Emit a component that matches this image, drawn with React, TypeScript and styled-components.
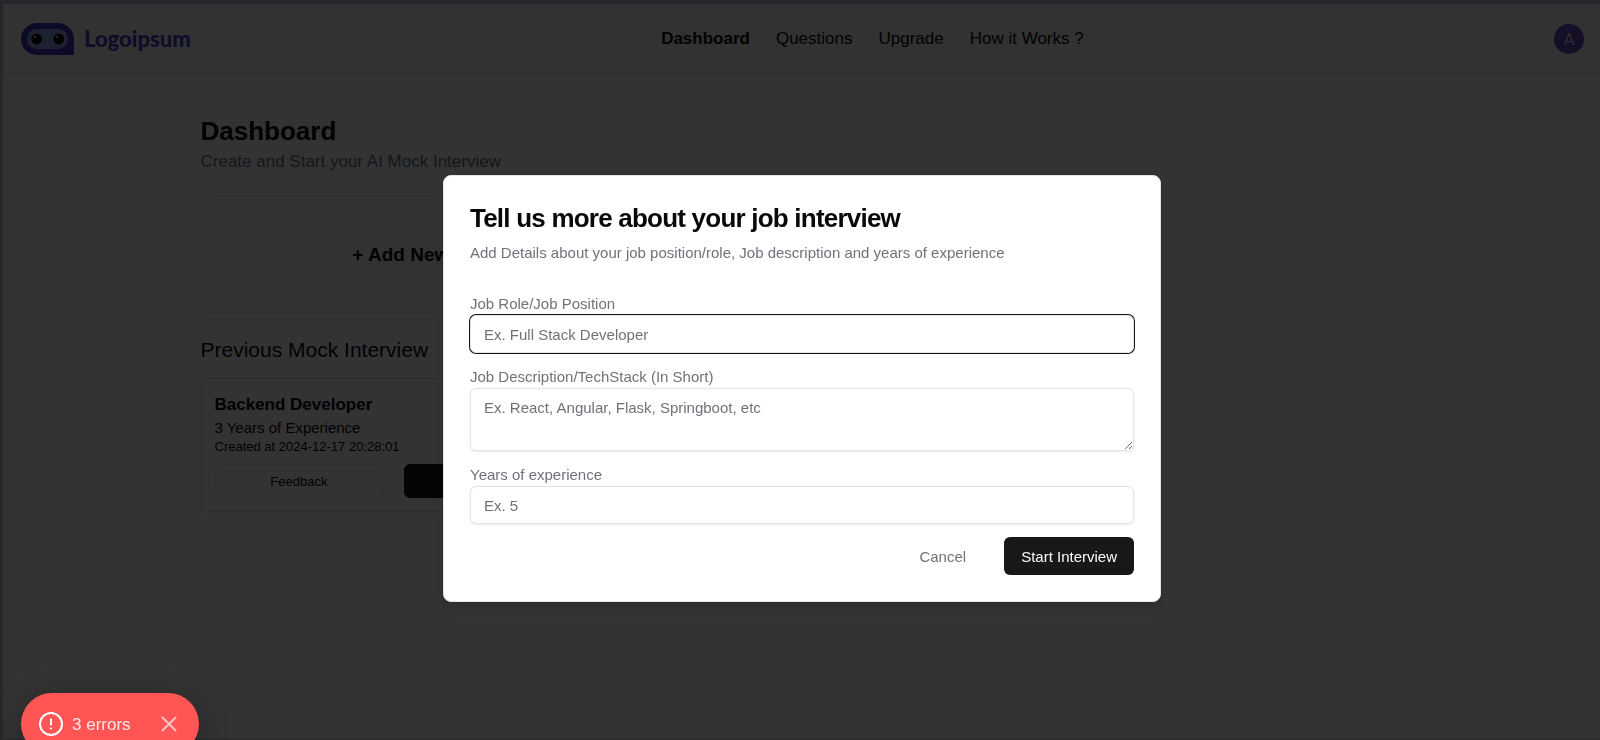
import React from "react";
import styled, { createGlobalStyle } from "styled-components";

const GlobalStyle = createGlobalStyle`
  *, *::before, *::after { box-sizing: border-box; }
  html, body { margin: 0; height: 100%; }
  body {
    overflow: hidden;
    background: #fff;
    color: #09090b;
    font-family: "Liberation Sans", Arial, sans-serif;
    font-size: 15px;
    line-height: 21px;
  }
  h1, h2, h3, p { margin: 0; font-weight: 400; }
  button, input, textarea { font: inherit; }
  a { color: inherit; text-decoration: none; }
`;

const Page = styled.div`
  min-height: 100vh;
  border: 0 solid #c4c0e0;
  border-width: 4px 0 1px 3px;
`;

const Header = styled.header`
  display: flex;
  justify-content: space-between;
  align-items: center;
  height: 68px;
  padding: 2px 16px 0 18px;
  background: #f8f8f8;
  box-shadow: 0 1px 3px rgba(0, 0, 0, 0.15);
`;

const Brand = styled.a`
  display: flex;
  align-items: center;
  gap: 10px;
  color: #4c40cf;
  font-family: Lato, sans-serif;
  font-size: 22px;
  font-weight: 900;
  line-height: 32px;
`;

const Nav = styled.nav`
  display: flex;
  gap: 26px;
  font-size: 17px;
  line-height: 26px;
`;

const NavLink = styled.a<{ $active?: boolean }>`
  font-weight: ${(p) => (p.$active ? 700 : 400)};
`;

const Avatar = styled.button`
  width: 30px;
  height: 30px;
  padding: 0;
  border: 0;
  border-radius: 50%;
  background: #6c47c4;
  color: #e0d8f4;
  font-family: Roboto, sans-serif;
  font-size: 17px;
`;

const Main = styled.main`
  max-width: 1202px;
  margin: 0 auto;
  padding-top: 42px;
`;

const PageTitle = styled.h1`
  font-size: 26px;
  font-weight: 700;
  line-height: 34px;
`;

const PageText = styled.p`
  margin-top: 1px;
  color: #6b7280;
  font-size: 17px;
  line-height: 26px;
`;

const Grid = styled.div<{ $gap: number; $top: number }>`
  display: grid;
  grid-template-columns: repeat(3, 1fr);
  gap: ${(p) => p.$gap}px;
  margin-top: ${(p) => p.$top}px;
`;

const AddCard = styled.button`
  height: 117px;
  border: 1px solid #e4e4e7;
  border-radius: 8px;
  background: #f8f8f8;
  color: inherit;
  font-size: 19px;
  font-weight: 700;
`;

const SectionTitle = styled.h2`
  margin-top: 22px;
  font-size: 21px;
  line-height: 30px;
`;

const Card = styled.article`
  padding: 13px;
  border: 1px solid #dcdcdf;
  box-shadow: 0 1px 2px rgba(0, 0, 0, 0.08);
`;

const CardTitle = styled.h3`
  font-size: 17px;
  font-weight: 700;
  line-height: 25px;
`;

const CardDate = styled.p`
  font-size: 13px;
  line-height: 17px;
`;

const CardActions = styled.div`
  display: flex;
  gap: 21px;
  margin-top: 9px;
`;

const CardButton = styled.button<{ $dark?: boolean }>`
  flex: 1;
  height: 34px;
  border: 1px solid ${(p) => (p.$dark ? "#18181b" : "#e4e4e7")};
  border-radius: 6px;
  background: ${(p) => (p.$dark ? "#18181b" : "#fff")};
  color: ${(p) => (p.$dark ? "#fafafa" : "inherit")};
  font-size: 13px;
`;

const Overlay = styled.div`
  position: fixed;
  inset: 0;
  display: flex;
  justify-content: center;
  align-items: flex-start;
  padding: 175px 0 0 4px;
  background: rgba(0, 0, 0, 0.8);
`;

const Dialog = styled.section`
  width: 100%;
  max-width: 718px;
  padding: 26px;
  border: 1px solid #e4e4e7;
  border-radius: 8px;
  background: #fff;
  color: #71717a;
  box-shadow: 0 10px 15px rgba(0, 0, 0, 0.1);
`;

const DialogTitle = styled.h2`
  color: #09090b;
  font-size: 26px;
  font-weight: 700;
  line-height: 32px;
  letter-spacing: -0.03em;
`;

const DialogText = styled.p`
  margin-top: 8px;
`;

const Form = styled.form`
  display: flex;
  flex-direction: column;
  gap: 13px;
  margin-top: 30px;
`;

const Field = styled.label`
  display: flex;
  flex-direction: column;
  gap: 1px;
`;

const fieldBox = `
  width: 100%;
  border: 1px solid #e4e4e7;
  border-radius: 6px;
  background: #fff;
  color: #09090b;
  outline: none;
  box-shadow: 0 1px 2px rgba(0, 0, 0, 0.08);
  &::placeholder { color: #71717a; opacity: 1; }
  &:focus { box-shadow: 0 0 0 1px #18181b; }
`;

const Input = styled.input`
  ${fieldBox}
  height: 38px;
  padding: 0 13px;
`;

const TextArea = styled.textarea`
  ${fieldBox}
  height: 63px;
  padding: 8px 13px;
`;

const Actions = styled.div`
  display: flex;
  justify-content: flex-end;
  gap: 21px;
`;

const ActionButton = styled.button<{ $primary?: boolean }>`
  height: 38px;
  padding: 0 17px;
  border: 0;
  border-radius: 6px;
  background: ${(p) => (p.$primary ? "#18181b" : "transparent")};
  color: ${(p) => (p.$primary ? "#fafafa" : "inherit")};
`;

const Toast = styled.div`
  position: fixed;
  left: 21px;
  bottom: -15px;
  display: flex;
  align-items: center;
  height: 62px;
  padding: 0 20px 0 17px;
  border-radius: 31px;
  background: #ff5555;
  color: #ffe6e6;
  font-size: 17px;
  box-shadow: 0 8px 32px rgba(0, 0, 0, 0.3);
`;

const ToastText = styled.span`
  margin: 0 28px 0 8px;
`;

const ToastClose = styled.button`
  display: flex;
  padding: 0;
  border: 0;
  background: none;
  color: #ffc4c4;
`;

const LogoMark = () => (
  <svg width="53" height="32" viewBox="0 0 53 32" aria-hidden="true">
    <path d="M16 0H37A16 16 0 0 1 53 16V32H16A16 16 0 0 1 16 0Z" fill="#4335c8" />
    <rect x="6" y="6" width="41" height="20" rx="10" fill="#8ea4ee" />
    <circle cx="15.7" cy="16" r="5.4" fill="#000" />
    <circle cx="37.9" cy="16" r="5.4" fill="#000" />
    <circle cx="14" cy="14" r="1.1" fill="#fff" />
    <circle cx="36.2" cy="14" r="1.1" fill="#fff" />
  </svg>
);

const links = ["Dashboard", "Questions", "Upgrade", "How it Works ?"];

export default function App() {
  return (
    <>
      <GlobalStyle />
      <Page>
        <Header>
          <Brand href="#">
            <LogoMark />
            Logoipsum
          </Brand>
          <Nav>
            {links.map((link, i) => (
              <NavLink key={link} href="#" $active={i === 0}>
                {link}
              </NavLink>
            ))}
          </Nav>
          <Avatar type="button">A</Avatar>
        </Header>
        <Main>
          <PageTitle>Dashboard</PageTitle>
          <PageText>Create and Start your AI Mock Interview</PageText>
          <Grid $gap={0} $top={21}>
            <AddCard type="button">+ Add New</AddCard>
          </Grid>
          <SectionTitle>Previous Mock Interview</SectionTitle>
          <Grid $gap={21} $top={13}>
            <Card>
              <CardTitle>Backend Developer</CardTitle>
              <p>3 Years of Experience</p>
              <CardDate>Created at 2024-12-17 20:28:01</CardDate>
              <CardActions>
                <CardButton type="button">Feedback</CardButton>
                <CardButton type="button" $dark aria-label="Start" />
              </CardActions>
            </Card>
          </Grid>
        </Main>
      </Page>
      <Overlay>
        <Dialog role="dialog" aria-modal="true" aria-labelledby="dialog-title">
          <DialogTitle id="dialog-title">Tell us more about your job interview</DialogTitle>
          <DialogText>
            Add Details about your job position/role, Job description and years of experience
          </DialogText>
          <Form>
            <Field>
              Job Role/Job Position
              <Input autoFocus placeholder="Ex. Full Stack Developer" />
            </Field>
            <Field>
              Job Description/TechStack (In Short)
              <TextArea placeholder="Ex. React, Angular, Flask, Springboot, etc" />
            </Field>
            <Field>
              Years of experience
              <Input placeholder="Ex. 5" />
            </Field>
            <Actions>
              <ActionButton type="button">Cancel</ActionButton>
              <ActionButton type="submit" $primary>
                Start Interview
              </ActionButton>
            </Actions>
          </Form>
        </Dialog>
      </Overlay>
      <Toast role="status">
        <svg width="26" height="26" viewBox="0 0 26 26" fill="none" stroke="#fff" strokeWidth="2" strokeLinecap="round" aria-hidden="true">
          <circle cx="13" cy="13" r="11" />
          <path d="M13 8.5V13.5M13 17.5V17.6" />
        </svg>
        <ToastText>3 errors</ToastText>
        <ToastClose type="button" aria-label="Close">
          <svg width="20" height="20" viewBox="0 0 20 20" fill="none" stroke="currentColor" strokeWidth="2" strokeLinecap="round">
            <path d="M3.5 3.5L16.5 16.5M16.5 3.5L3.5 16.5" />
          </svg>
        </ToastClose>
      </Toast>
    </>
  );
}
